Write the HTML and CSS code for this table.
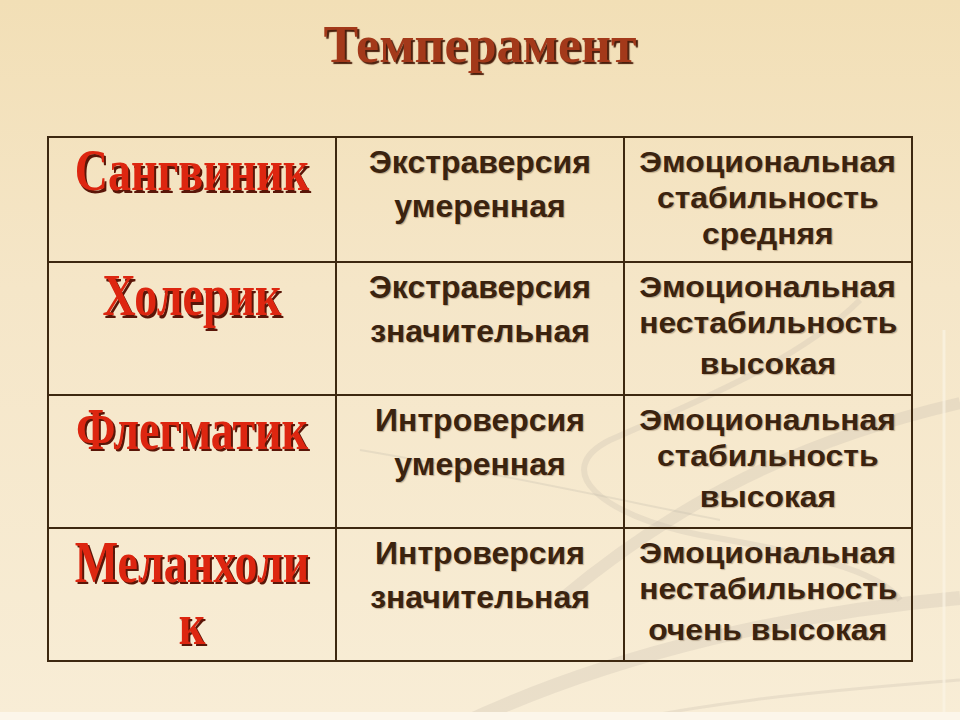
FILE: index.html
```html
<!DOCTYPE html>
<html lang="ru">
<head>
<meta charset="utf-8">
<title>Темперамент</title>
<link rel="stylesheet" href="styles.css">
</head>
<body>
<div class="slide">
  <svg class="swoosh" viewBox="0 0 960 720" width="960" height="720" aria-hidden="true">
    <path d="M460 725 C 620 650, 800 612, 960 598" fill="none" stroke="#c4bcac" stroke-width="14" stroke-opacity="0.28"/>
    <path d="M560 735 C 700 700, 840 690, 960 680" fill="none" stroke="#c4bcac" stroke-width="3" stroke-opacity="0.28"/>
    <path d="M560 600 C 680 500, 800 440, 960 403" fill="none" stroke="#c4bcac" stroke-width="12" stroke-opacity="0.28"/>
    <path d="M860 300 C 800 360, 700 400, 610 440 C 550 470, 600 515, 700 535 C 800 552, 880 570, 900 600" fill="none" stroke="#c4bcac" stroke-width="6" stroke-opacity="0.28"/>
    <path d="M360 450 C 480 470, 620 500, 720 520" fill="none" stroke="#c4bcac" stroke-width="2" stroke-opacity="0.3"/>
    <path d="M944 330 L944 720" fill="none" stroke="#fbf4e4" stroke-width="3" stroke-opacity="0.7"/>
    <rect x="0" y="712" width="960" height="8" fill="#fcf6ea"/>
  </svg>
  <h1 class="title">Темперамент</h1>
  <table class="grid">
    <colgroup><col class="c1"><col class="c2"><col class="c3"></colgroup>
    <tr class="r1">
      <td class="type"><span>Сангвиник</span></td>
      <td class="ext"><span>Экстраверсия</span><br><span>умеренная</span></td>
      <td class="emo"><span>Эмоциональная</span><br><span>стабильность</span><br><span>средняя</span></td>
    </tr>
    <tr class="rn">
      <td class="type"><span>Холерик</span></td>
      <td class="ext"><span>Экстраверсия</span><br><span>значительная</span></td>
      <td class="emo"><span>Эмоциональная</span><br><span>нестабильность</span><br><span class="last">высокая</span></td>
    </tr>
    <tr class="rn">
      <td class="type"><span>Флегматик</span></td>
      <td class="ext"><span>Интроверсия</span><br><span>умеренная</span></td>
      <td class="emo"><span>Эмоциональная</span><br><span>стабильность</span><br><span class="last">высокая</span></td>
    </tr>
    <tr class="rn">
      <td class="type"><span>Меланхоли</span><br><span>к</span></td>
      <td class="ext"><span>Интроверсия</span><br><span>значительная</span></td>
      <td class="emo"><span>Эмоциональная</span><br><span>нестабильность</span><br><span class="last">очень высокая</span></td>
    </tr>
  </table>
</div>
</body>
</html>
```

FILE: styles.css
```css
html, body {
  margin: 0;
  padding: 0;
}
body {
  width: 960px;
  height: 720px;
  overflow: hidden;
}
.slide {
  position: relative;
  width: 960px;
  height: 720px;
  background: linear-gradient(180deg, #f2dfb6 0%, #f5e6c8 40%, #f8edd6 100%);
  display: flex;
  flex-direction: column;
  align-items: center;
}
.swoosh {
  position: absolute;
  left: 0;
  top: 0;
  pointer-events: none;
}
.title {
  position: relative;
  margin: 17px 0 0 0;
  height: 56px;
  font-family: "Liberation Serif", "Times New Roman", serif;
  font-weight: bold;
  font-size: 52px;
  line-height: 56px;
  color: #a3391a;
  text-shadow: 2px 2px 1px #4a1e0c;
}
.grid {
  position: relative;
  margin: 63px 0 0 47px;
  align-self: flex-start;
  border-collapse: collapse;
  table-layout: fixed;
  width: 866px;
}
.c1, .c2, .c3 { width: 288px; }
.grid tr.r1 { height: 125px; }
.grid tr.rn { height: 133px; }
.grid td {
  border: 2px solid #3d2810;
  vertical-align: top;
  text-align: center;
  padding: 0;
}
.type {
  font-family: "Liberation Serif", "Times New Roman", serif;
  font-weight: bold;
  font-size: 46px;
  line-height: 62px;
  color: #dd2610;
  padding-top: 2px !important;
}
.type span {
  display: inline-block;
  transform: scaleY(1.3);
  text-shadow: 2px 2px 0 #5a1608;
}
.ext {
  font-family: "Liberation Sans", Arial, sans-serif;
  font-weight: bold;
  font-size: 32px;
  line-height: 44px;
  color: #3b230f;
  padding-top: 2px !important;
}
.ext span {
  display: inline-block;
  text-shadow: 1px 1px 1px rgba(90, 60, 30, 0.35);
}
.emo {
  font-family: "Liberation Sans", Arial, sans-serif;
  font-weight: bold;
  font-size: 29px;
  line-height: 36px;
  color: #3b230f;
  padding-top: 6px !important;
}
.emo span {
  display: inline-block;
  transform: scaleX(1.1);
  text-shadow: 1px 1px 1px rgba(90, 60, 30, 0.35);
}
.emo span.last {
  margin-top: 5px;
}
```
